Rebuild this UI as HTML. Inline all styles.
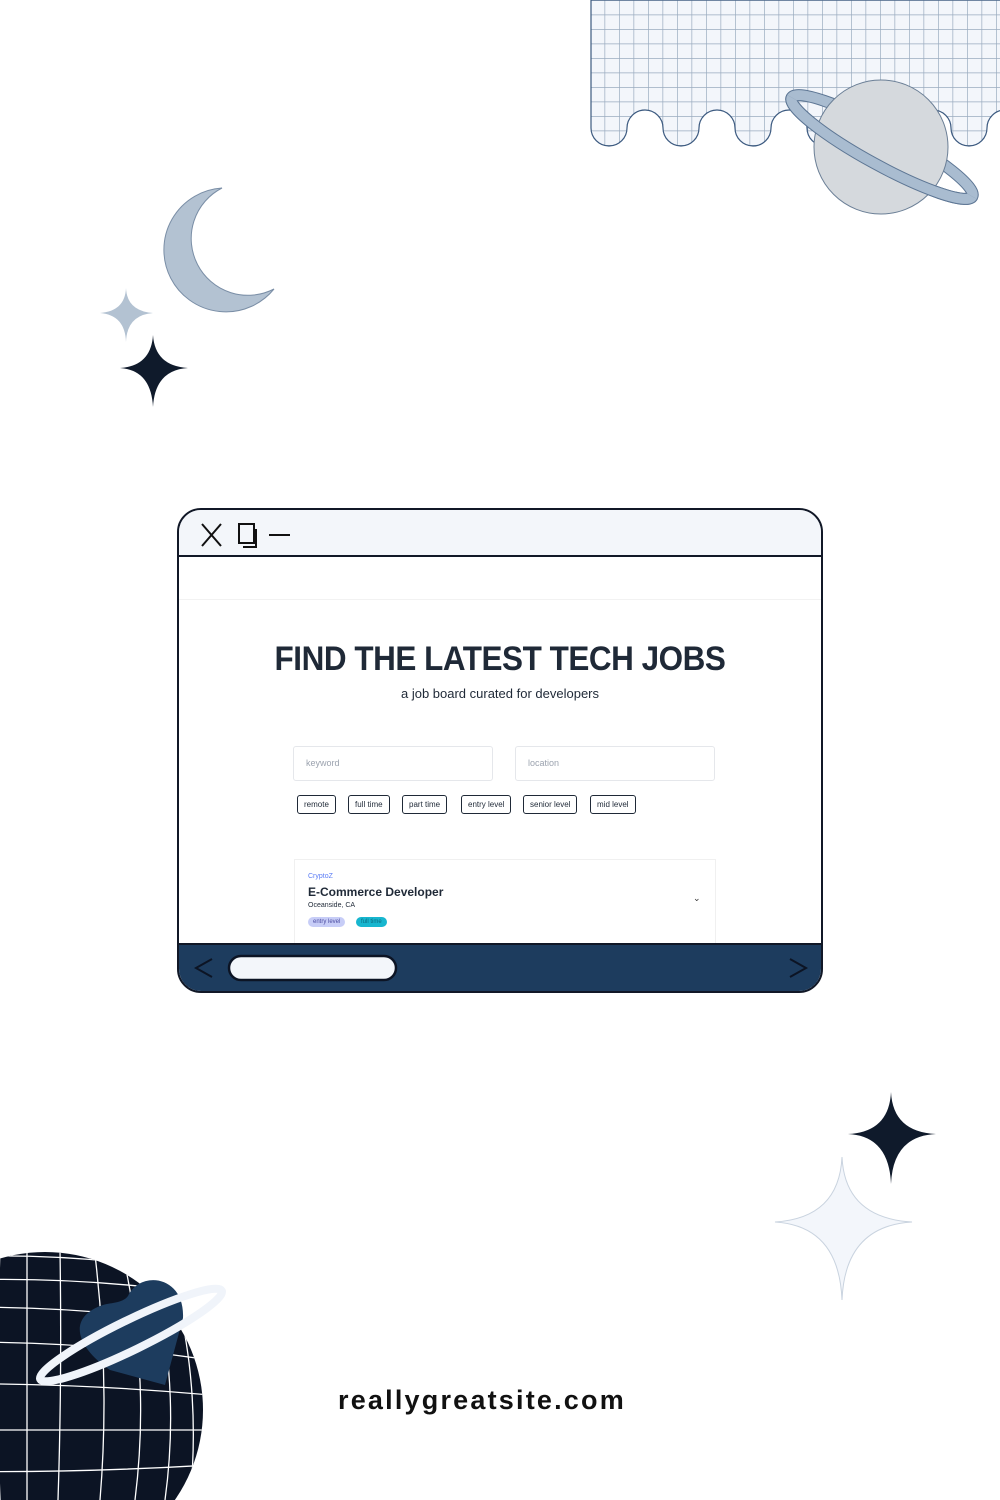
<!DOCTYPE html>
<html><head><meta charset="utf-8"><style>
*{margin:0;padding:0;box-sizing:border-box}
html,body{width:1000px;height:1500px;overflow:hidden}
body{background:#fff;position:relative;font-family:"Liberation Sans",sans-serif}
.abs{position:absolute}
.win{left:177px;top:508px;width:646px;height:485px;border:2.5px solid #111827;border-radius:24px;overflow:hidden;background:#fff}
.bar{height:47px;background:#f3f6fa;border-bottom:2.5px solid #111827;position:relative}
.foot{position:absolute;left:0;right:0;bottom:0;height:48px;background:#1d3c5e;border-top:2.5px solid #111827}
h1{position:absolute;left:0;right:0;top:130px;text-align:center;font-size:34px;font-weight:bold;color:#1f2937;letter-spacing:-0.5px;transform:scaleX(0.925)}
.sub{position:absolute;left:0;right:0;top:176px;text-align:center;font-size:13px;color:#1f2937}
.inp{position:absolute;top:236px;width:200px;height:35px;border:1px solid #e5e7eb;border-radius:3px;font-size:9px;color:#9ca3af;padding:11px 12px}
.tag{position:absolute;top:285px;height:19px;border:1.3px solid #1f2937;border-radius:3px;font-size:8px;color:#1f2937;padding:4px 6px}
.card{position:absolute;left:115px;top:349px;width:422px;height:100px;border:1px solid #f0f0f0}
</style></head><body>
<svg class="abs" style="left:0;top:0" width="1000" height="1500">
<defs>
<pattern id="g" x="590" y="0" width="14.5" height="14.5" patternUnits="userSpaceOnUse"><rect width="14.5" height="14.5" fill="#f3f6fb"/><path d="M0 0V14.5M0 0H14.5" stroke="#9aabbf" stroke-width="1.4" fill="none"/></pattern>
<clipPath id="gc"><circle cx="45" cy="1410" r="158"/></clipPath>
<clipPath id="front"><rect x="700" y="147" width="400" height="200" transform="rotate(28.7 882 147)"/></clipPath>
</defs>
<path d="M591 0V128A18 18 0 0 0 627 128A18 18 0 0 1 663 128A18 18 0 0 0 699 128A18 18 0 0 1 735 128A18 18 0 0 0 771 128A18 18 0 0 1 807 128A18 18 0 0 0 843 128A18 18 0 0 1 879 128A18 18 0 0 0 915 128A18 18 0 0 1 951 128A18 18 0 0 0 987 128A18 18 0 0 1 1023 128V0Z" fill="url(#g)" stroke="#3c5a80" stroke-width="1.2"/>
<g transform="rotate(28.7 882 147)"><ellipse cx="882" cy="147" rx="103" ry="18" fill="none" stroke="#5d7694" stroke-width="12"/><ellipse cx="882" cy="147" rx="103" ry="18" fill="none" stroke="#a9bcd0" stroke-width="10"/></g>
<circle cx="881" cy="147" r="67" fill="#d5d9dd" stroke="#6b7f96" stroke-width="1"/>
<g clip-path="url(#front)"><g transform="rotate(28.7 882 147)"><ellipse cx="882" cy="147" rx="103" ry="18" fill="none" stroke="#5d7694" stroke-width="12"/><ellipse cx="882" cy="147" rx="103" ry="18" fill="none" stroke="#a9bcd0" stroke-width="10"/></g></g>
<path d="M222 188a62 62 0 1 0 52 101a50 50 0 1 1 -52 -101Z" fill="#b3c2d2" stroke="#7a8ea6" stroke-width="1"/>
<path d="M126 288Q127 311 153 313Q127 315 126 342Q125 315 100 313Q125 311 126 288Z" fill="#b3c2d2"/>
<path d="M153 335Q155 366 188 368Q155 370 153 407Q151 370 120 368Q151 366 153 335Z" fill="#0f1a2b"/>
<path d="M891 1092Q893 1132 936 1134Q893 1136 891 1184Q889 1136 848 1134Q889 1132 891 1092Z" fill="#0f1a2b"/>
<path d="M842 1157Q845 1218 912 1222Q845 1226 842 1300Q839 1226 775 1222Q839 1218 842 1157Z" fill="#f3f6fb" stroke="#c9d3df" stroke-width="1"/>
<circle cx="45" cy="1410" r="158" fill="#0c1424"/>
<g clip-path="url(#gc)" stroke="#fff" stroke-width="1.3" fill="none">
<path d="M-120 1262Q45 1245 210 1275M-120 1285Q45 1270 210 1295M-120 1310Q45 1300 210 1325M-120 1345Q45 1335 210 1360M-120 1385Q45 1380 210 1395M-120 1430Q45 1430 210 1430M-120 1470Q45 1475 210 1465"/>
<path d="M27 1250V1500M60 1250Q62 1380 58 1500M95 1255Q110 1380 100 1500M125 1265Q150 1380 135 1500M155 1285Q180 1390 165 1500M180 1310Q200 1400 190 1500M0 1250Q-5 1380 0 1500"/>
</g>
<path d="M128 1296C140 1270 185 1275 183 1318L165 1385L110 1370C80 1350 65 1320 100 1306C110 1302 122 1304 128 1296Z" fill="#1d3c5e"/>
<g transform="rotate(-26 131 1335)"><ellipse cx="131" cy="1335" rx="101" ry="15" fill="none" stroke="#f0f4fa" stroke-width="8"/></g>
</svg>
<div class="abs win">
<div class="bar">
<svg class="abs" style="left:20px;top:12px" width="100" height="26"><path d="M3 2L22 24M22 2L3 24" stroke="#111" stroke-width="2"/><rect x="40" y="2" width="15" height="19" fill="none" stroke="#111" stroke-width="2"/><path d="M57 7V25H44" fill="none" stroke="#111" stroke-width="2"/><path d="M70 13H91" stroke="#111" stroke-width="2"/></svg>
</div>
<div style="height:43px;border-bottom:1px solid #f2f2f2"></div>
<h1>FIND THE LATEST TECH JOBS</h1>
<div class="sub">a job board curated for developers</div>
<div class="inp" style="left:114px">keyword</div>
<div class="inp" style="left:336px">location</div>
<div class="tag" style="left:118px">remote</div>
<div class="tag" style="left:169px">full time</div>
<div class="tag" style="left:223px">part time</div>
<div class="tag" style="left:282px">entry level</div>
<div class="tag" style="left:344px">senior level</div>
<div class="tag" style="left:411px">mid level</div>
<div class="card">
<div class="abs" style="left:13px;top:13px;font-size:7px;color:#5b7cf5">CryptoZ</div>
<div class="abs" style="left:13px;top:25px;font-size:12px;font-weight:bold;color:#1f2937">E-Commerce Developer</div>
<div class="abs" style="left:13px;top:42px;font-size:7px;color:#1f2937">Oceanside, CA</div>
<div class="abs" style="left:13px;top:57px;font-size:6px;color:#4b4ba0;background:#c7cdf7;border-radius:6px;padding:2px 5px">entry level</div>
<div class="abs" style="left:61px;top:57px;font-size:6px;color:#0b6b80;background:#17b6cf;border-radius:6px;padding:2px 5px">full time</div>
<div class="abs" style="left:398px;top:33px;font-size:9px;color:#333">⌄</div>
</div>
<div class="foot">
<svg class="abs" style="left:0;top:0" width="646" height="48"><path d="M33 14L17 23L33 32" fill="none" stroke="#0c1424" stroke-width="2"/><path d="M611 14L627 23L611 32" fill="none" stroke="#0c1424" stroke-width="2"/><rect x="50" y="11" width="167" height="24" rx="12" fill="#f3f6fa" stroke="#0c1424" stroke-width="2.5"/></svg>
</div>
</div>
<div class="abs" style="left:338px;top:1385px;font-size:27px;font-weight:bold;letter-spacing:2.2px;color:#111">reallygreatsite.com</div>
</body></html>
